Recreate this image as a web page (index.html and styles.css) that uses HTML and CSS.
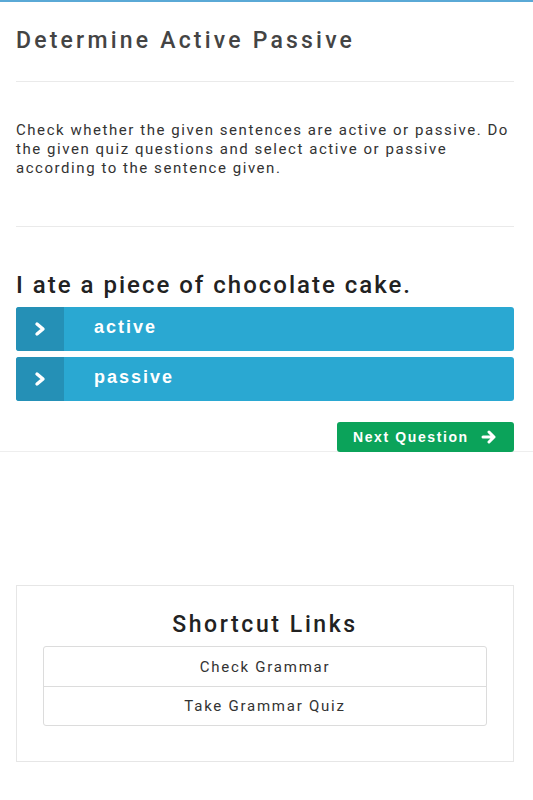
FILE: index.html
```html
<!DOCTYPE html>
<html>
<head>
<meta charset="utf-8">
<link rel="stylesheet" href="styles.css">
</head>
<body>
<div class="topbar"></div>
<main class="page">
  <h1 class="title">Determine Active Passive</h1>
  <div class="intro">
    <p>Check whether the given sentences are active or passive. Do the given quiz questions and select active or passive according to the sentence given.</p>
  </div>
  <section class="quiz">
    <h2 class="question">I ate a piece of chocolate cake.</h2>
    <div class="options">
      <button class="option"><span class="opt-icon"><svg width="16" height="16" viewBox="0 0 16 16"><path d="M5 3 L11 8 L5 13" fill="none" stroke="#fff" stroke-width="3.4" stroke-linecap="round" stroke-linejoin="round"/></svg></span><span class="opt-text">active</span></button>
      <button class="option"><span class="opt-icon"><svg width="16" height="16" viewBox="0 0 16 16"><path d="M5 3 L11 8 L5 13" fill="none" stroke="#fff" stroke-width="3.4" stroke-linecap="round" stroke-linejoin="round"/></svg></span><span class="opt-text">passive</span></button>
    </div>
    <div class="actions">
      <button class="next"><span>Next Question</span><svg width="16" height="14" viewBox="0 0 16 14"><path d="M2 7 H13 M8 2 L13 7 L8 12" fill="none" stroke="#fff" stroke-width="3" stroke-linecap="round" stroke-linejoin="round"/></svg></button>
    </div>
  </section>
</main>
<div class="rule"></div>
<div class="page">
  <section class="shortcuts">
    <h3 class="sc-title">Shortcut Links</h3>
    <ul class="sc-list">
      <li>Check Grammar</li>
      <li>Take Grammar Quiz</li>
    </ul>
  </section>
</div>
</body>
</html>
```
FILE: styles.css
```css
* { box-sizing: border-box; }
body {
  margin: 0;
  background: #fff;
  font-family: Roboto, "Liberation Sans", sans-serif;
  color: #333;
}
.topbar {
  height: 2px;
  background: #5aa9d6;
}
.page {
  padding: 0 16px 0 16px;
  width: 530px;
}
.title {
  margin: 0;
  padding: 26px 0 27px;
  font-size: 23px;
  font-weight: 500;
  line-height: 26px;
  letter-spacing: 3.2px;
  color: #444;
  border-bottom: 1px solid #eaeaea;
  white-space: nowrap;
}
.intro {
  border-bottom: 1px solid #eaeaea;
  padding: 39px 0 48px;
}
.intro p {
  margin: 0;
  font-size: 15px;
  line-height: 19px;
  letter-spacing: 1.55px;
  color: #333;
}
.quiz {
  padding-top: 45px;
}
.question {
  margin: 0 0 9px;
  font-size: 24px;
  font-weight: 500;
  line-height: 26px;
  letter-spacing: 2px;
  color: #222;
  white-space: nowrap;
}
.options {
  display: flex;
  flex-direction: column;
  gap: 6px;
}
.option {
  display: flex;
  align-items: stretch;
  height: 44px;
  padding: 0;
  border: 0;
  border-radius: 3px;
  overflow: hidden;
  background: #2aa8d2;
  color: #fff;
  font-family: "Liberation Sans", Arial, sans-serif;
  font-weight: 700;
  font-size: 18px;
  letter-spacing: 2px;
  text-align: left;
}
.opt-icon {
  width: 48px;
  background: #2590b6;
  display: flex;
  align-items: center;
  justify-content: center;
}
.opt-text {
  display: flex;
  align-items: center;
  padding-left: 30px;
  padding-bottom: 3px;
}
.actions {
  display: flex;
  justify-content: flex-end;
  padding-top: 21px;
}
.next {
  display: flex;
  align-items: center;
  gap: 12px;
  height: 30px;
  width: 177px;
  padding: 0 0 0 16px;
  border: 0;
  border-radius: 3px;
  background: #0ba35a;
  color: #fff;
  font-family: "Liberation Sans", Arial, sans-serif;
  font-weight: 700;
  font-size: 14px;
  letter-spacing: 1.6px;
  white-space: nowrap;
}
.rule {
  border-top: 1px solid #eeeeee;
  margin-top: -1px;
}
.shortcuts {
  margin-top: 133px;
  width: 498px;
  border: 1px solid #e6e6e6;
  padding: 26px 26px 35px;
}
.sc-title {
  margin: 0 0 8px;
  text-align: center;
  font-size: 23px;
  font-weight: 500;
  line-height: 26px;
  letter-spacing: 2.6px;
  color: #222;
}
.sc-list {
  list-style: none;
  margin: 0;
  padding: 0;
  border: 1px solid #dcdcdc;
  border-radius: 3px;
}
.sc-list li {
  height: 39px;
  display: flex;
  align-items: center;
  justify-content: center;
  font-size: 15px;
  letter-spacing: 1.75px;
  color: #333;
}
.sc-list li + li {
  border-top: 1px solid #dcdcdc;
}
```
